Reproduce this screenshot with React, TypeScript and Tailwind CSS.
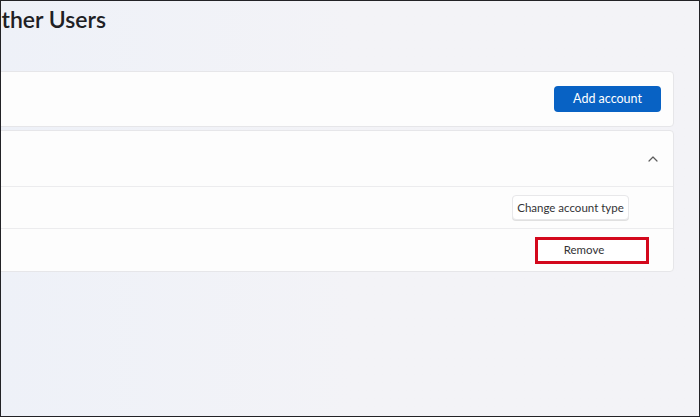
import React from 'react';

function ChevronUp() {
  return (
    <svg width="10" height="6" viewBox="0 0 10 6" fill="none" className="text-[#5c5c5c]">
      <path d="M1 5L5 1L9 5" stroke="currentColor" strokeWidth="1.2" strokeLinecap="round" strokeLinejoin="round" />
    </svg>
  );
}

export default function App() {
  return (
    <div
      className="w-[700px] h-[417px] overflow-hidden border border-[#222226] bg-[#f3f3f7] text-[#1b1b1b]"
      style={{ fontFamily: 'Lato, "Noto Sans", sans-serif' }}
    >
      <div className="flex h-full bg-gradient-to-r from-[#eef1f8] via-[#f3f3f7] to-[#f3f3f7]">
        <div className="-ml-[20px] flex flex-1 flex-col pr-[25px]">
          {/* Header */}
          <h1 className="ml-[2px] mt-[4px] h-[28px] text-[23px] font-semibold leading-[28px] text-[#202024]">
            Other Users
          </h1>

          {/* Add other user */}
          <div className="mt-[38px] flex h-[56px] items-center justify-end rounded-[4px] border border-[#e6e6e9] bg-[#fdfdfd] pr-[12px]">
            <button className="h-[26px] w-[107px] rounded-[4px] bg-[#0862c4] text-[12.5px] text-white">
              Add account
            </button>
          </div>

          {/* Expanded account */}
          <div className="mt-[3px] flex flex-col rounded-[4px] border border-[#e6e6e9] bg-[#fdfdfd]">
            <div className="flex h-[55px] items-center justify-end pr-[15px]">
              <ChevronUp />
            </div>
            <div className="flex h-[42px] items-center justify-end border-t border-[#ececee] pr-[44px]">
              <button className="h-[25px] w-[117px] rounded-[4px] border border-[#e8e8ea] bg-white text-[11.5px] text-[#333336] shadow-[0_1px_0_#e0e0e0]">
                Change account type
              </button>
            </div>
            <div className="flex h-[43px] items-center justify-end border-t border-[#ececee] pr-[24px]">
              <button className="h-[27px] w-[114px] border-[3px] border-[#d3081c] bg-white pr-[16px] text-[11.5px] text-[#333336]">
                Remove
              </button>
            </div>
          </div>
        </div>
      </div>
    </div>
  );
}
